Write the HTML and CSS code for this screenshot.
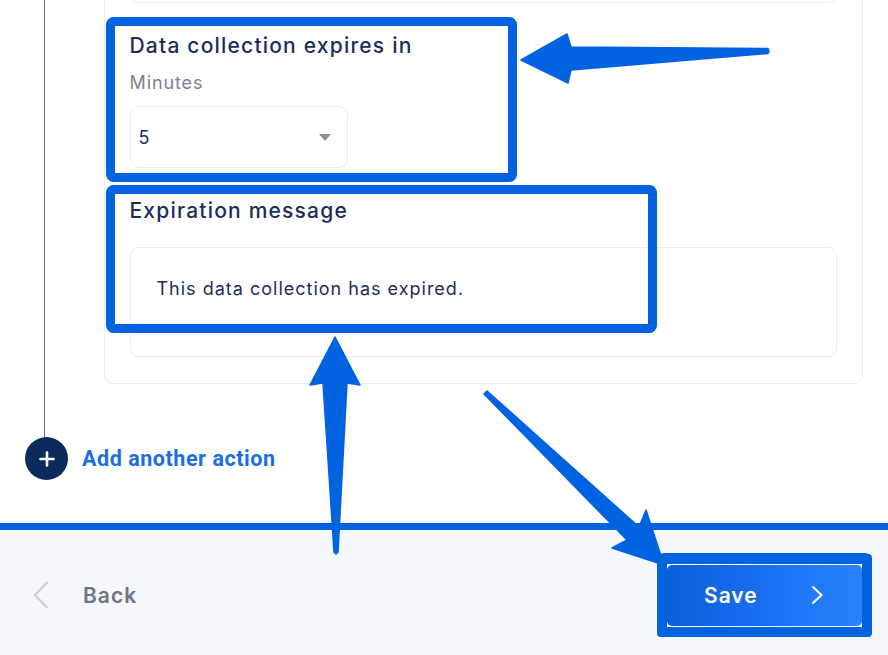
FILE: index.html
```html
<!DOCTYPE html>
<html lang="en">
<head>
<meta charset="utf-8">
<title>Data collection settings</title>
<link rel="stylesheet" href="styles.css">
</head>
<body>
<div class="page">
  <main class="main">
    <div class="flow">
      <section class="card">
        <div class="prev-input"></div>
        <div class="field field-expiry">
          <h2 class="field-title">Data collection expires in</h2>
          <div class="field-label">Minutes</div>
          <div class="select">
            <span class="select-value">5</span>
            <span class="select-caret"></span>
          </div>
        </div>
        <div class="field field-message">
          <h2 class="field-title">Expiration message</h2>
          <div class="textarea">This data collection has expired.</div>
        </div>
      </section>
    </div>
    <div class="add-action">
      <span class="add-circle">
        <svg width="18" height="18" viewBox="0 0 18 18"><path d="M9 2.5v13M2.5 9h13" stroke="#fff" stroke-width="2.6" stroke-linecap="round"/></svg>
      </span>
      <span class="add-text">Add another action</span>
    </div>
  </main>
  <footer class="footer">
    <button class="back">
      <svg class="back-chev" width="16" height="28" viewBox="0 0 16 28"><polyline points="14,1.5 2,14 14,26.5" fill="none" stroke="#c9cdd5" stroke-width="2" stroke-linecap="round" stroke-linejoin="round"/></svg>
      <span class="back-text">Back</span>
    </button>
    <div class="save-wrap">
      <button class="save">
        <span class="save-text">Save</span>
        <svg class="save-chev" width="12" height="20" viewBox="0 0 12 20"><polyline points="2,2 10.5,10 2,18" fill="none" stroke="#fff" stroke-width="2" stroke-linecap="round" stroke-linejoin="round"/></svg>
      </button>
    </div>
  </footer>
  <svg class="annotations" width="888" height="655" viewBox="0 0 888 655">
    <rect x="110.5" y="21.5" width="402" height="156" rx="3" fill="none" stroke="#0263e0" stroke-width="9"/>
    <rect x="110.5" y="189.5" width="542" height="139" rx="3" fill="none" stroke="#0263e0" stroke-width="9"/>
    <rect x="661.5" y="557.5" width="206" height="75" rx="3" fill="none" stroke="#0263e0" stroke-width="9"/>
    <polygon points="521,60 567,34 571,47 768,48.5 769,51 768,53.5 571,70 568,83" fill="#0263e0" stroke="#0263e0" stroke-width="1.5" stroke-linejoin="round"/>
    <polygon points="335,337 360,385 347,383 338,552 336,554 334,552 323,383 310,385" fill="#0263e0" stroke="#0263e0" stroke-width="1.5" stroke-linejoin="round"/>
    <polygon points="487,391 639,527 646,510 664,565 612,548 627,540 484,394" fill="#0263e0" stroke="#0263e0" stroke-width="1.5" stroke-linejoin="round"/>
  </svg>
</div>
</body>
</html>
```
FILE: styles.css
```css
* { box-sizing: border-box; }
html, body { margin: 0; padding: 0; }
body {
  width: 888px;
  height: 655px;
  overflow: hidden;
  background: #ffffff;
  font-family: "Inter", "Open Sans", sans-serif;
  color: #1c2d5a;
}
.page {
  position: relative;
  width: 888px;
  height: 655px;
  display: flex;
  flex-direction: column;
}
.main {
  height: 523px;
  overflow: hidden;
  background: #fff;
}
.flow {
  margin-left: 44px;
  margin-top: -60px;
  border-left: 1.5px solid #5b6e92;
  padding-left: 58.5px;
  padding-bottom: 53px;
}
.card {
  width: 759px;
  border: 1px solid #e9edf2;
  border-radius: 9px;
  padding: 0 25px 26px 25px;
}
.prev-input {
  height: 62px;
  border: 1px solid #e9edf2;
  border-top: none;
  border-radius: 0 0 9px 9px;
}
.field-title {
  margin: 0;
  font-size: 21px;
  line-height: 28px;
  font-weight: 500;
  color: #1c2d5a;
  letter-spacing: 1.2px;
}
.field-expiry { padding-top: 29px; }
.field-label {
  margin-top: 11px;
  font-size: 18px;
  line-height: 24px;
  color: #7b8191;
  letter-spacing: 0.9px;
}
.select {
  margin-top: 11px;
  width: 218px;
  height: 62px;
  border: 1px solid #e9edf2;
  border-radius: 9px;
  display: flex;
  align-items: center;
  justify-content: space-between;
  padding: 0 16px 0 8px;
}
.select-value { font-size: 18px; color: #1c2d5a; }
.select-caret {
  width: 0; height: 0;
  border-left: 6.5px solid transparent;
  border-right: 6.5px solid transparent;
  border-top: 7px solid #8b8f9f;
}
.field-message { padding-top: 29px; }
.textarea {
  margin-top: 22px;
  height: 110px;
  border: 1px solid #e9edf2;
  border-radius: 9px;
  padding: 29px 26px;
  font-size: 18px;
  line-height: 24px;
  letter-spacing: 1px;
  color: #1c2d5a;
}
.add-action {
  display: flex;
  align-items: center;
  margin-left: 25px;
  gap: 14px;
}
.add-circle {
  width: 43px;
  height: 43px;
  border-radius: 50%;
  background: #0c2b5d;
  display: flex;
  align-items: center;
  justify-content: center;
}
.add-text {
  font-family: "Roboto", "Liberation Sans", sans-serif;
  font-weight: 700;
  font-size: 21.5px;
  letter-spacing: 0.55px;
  color: #1b6ee0;
}
.footer {
  flex: 1;
  background: #f4f7fc;
  border-top: 7px solid #0263e0;
  display: flex;
  align-items: center;
  justify-content: space-between;
  padding: 5px 16px 0 33px;
}
.back {
  display: flex;
  align-items: center;
  gap: 34px;
  background: none;
  border: none;
  padding: 0;
  font-family: inherit;
}
.back-text {
  font-size: 21px;
  font-weight: 600;
  letter-spacing: 1px;
  color: #6e7686;
}
.save-wrap {
  display: flex;
  border: 10px solid #0263e0;
  border-radius: 4px;
  padding: 1px 0;
  background: #fff;
}
.save {
  width: 195px;
  height: 61px;
  border: none;
  border-radius: 5px;
  background: linear-gradient(90deg, #0d5ed9 0%, #1a6ff0 50%, #2684fc 100%);
  display: flex;
  align-items: center;
  padding: 0 39px 0 37px;
  justify-content: space-between;
  font-family: inherit;
}
.save-text {
  color: #fff;
  font-size: 21px;
  font-weight: 600;
  letter-spacing: 1px;
}
.annotations {
  position: absolute;
  left: 0;
  top: 0;
  pointer-events: none;
}
```
